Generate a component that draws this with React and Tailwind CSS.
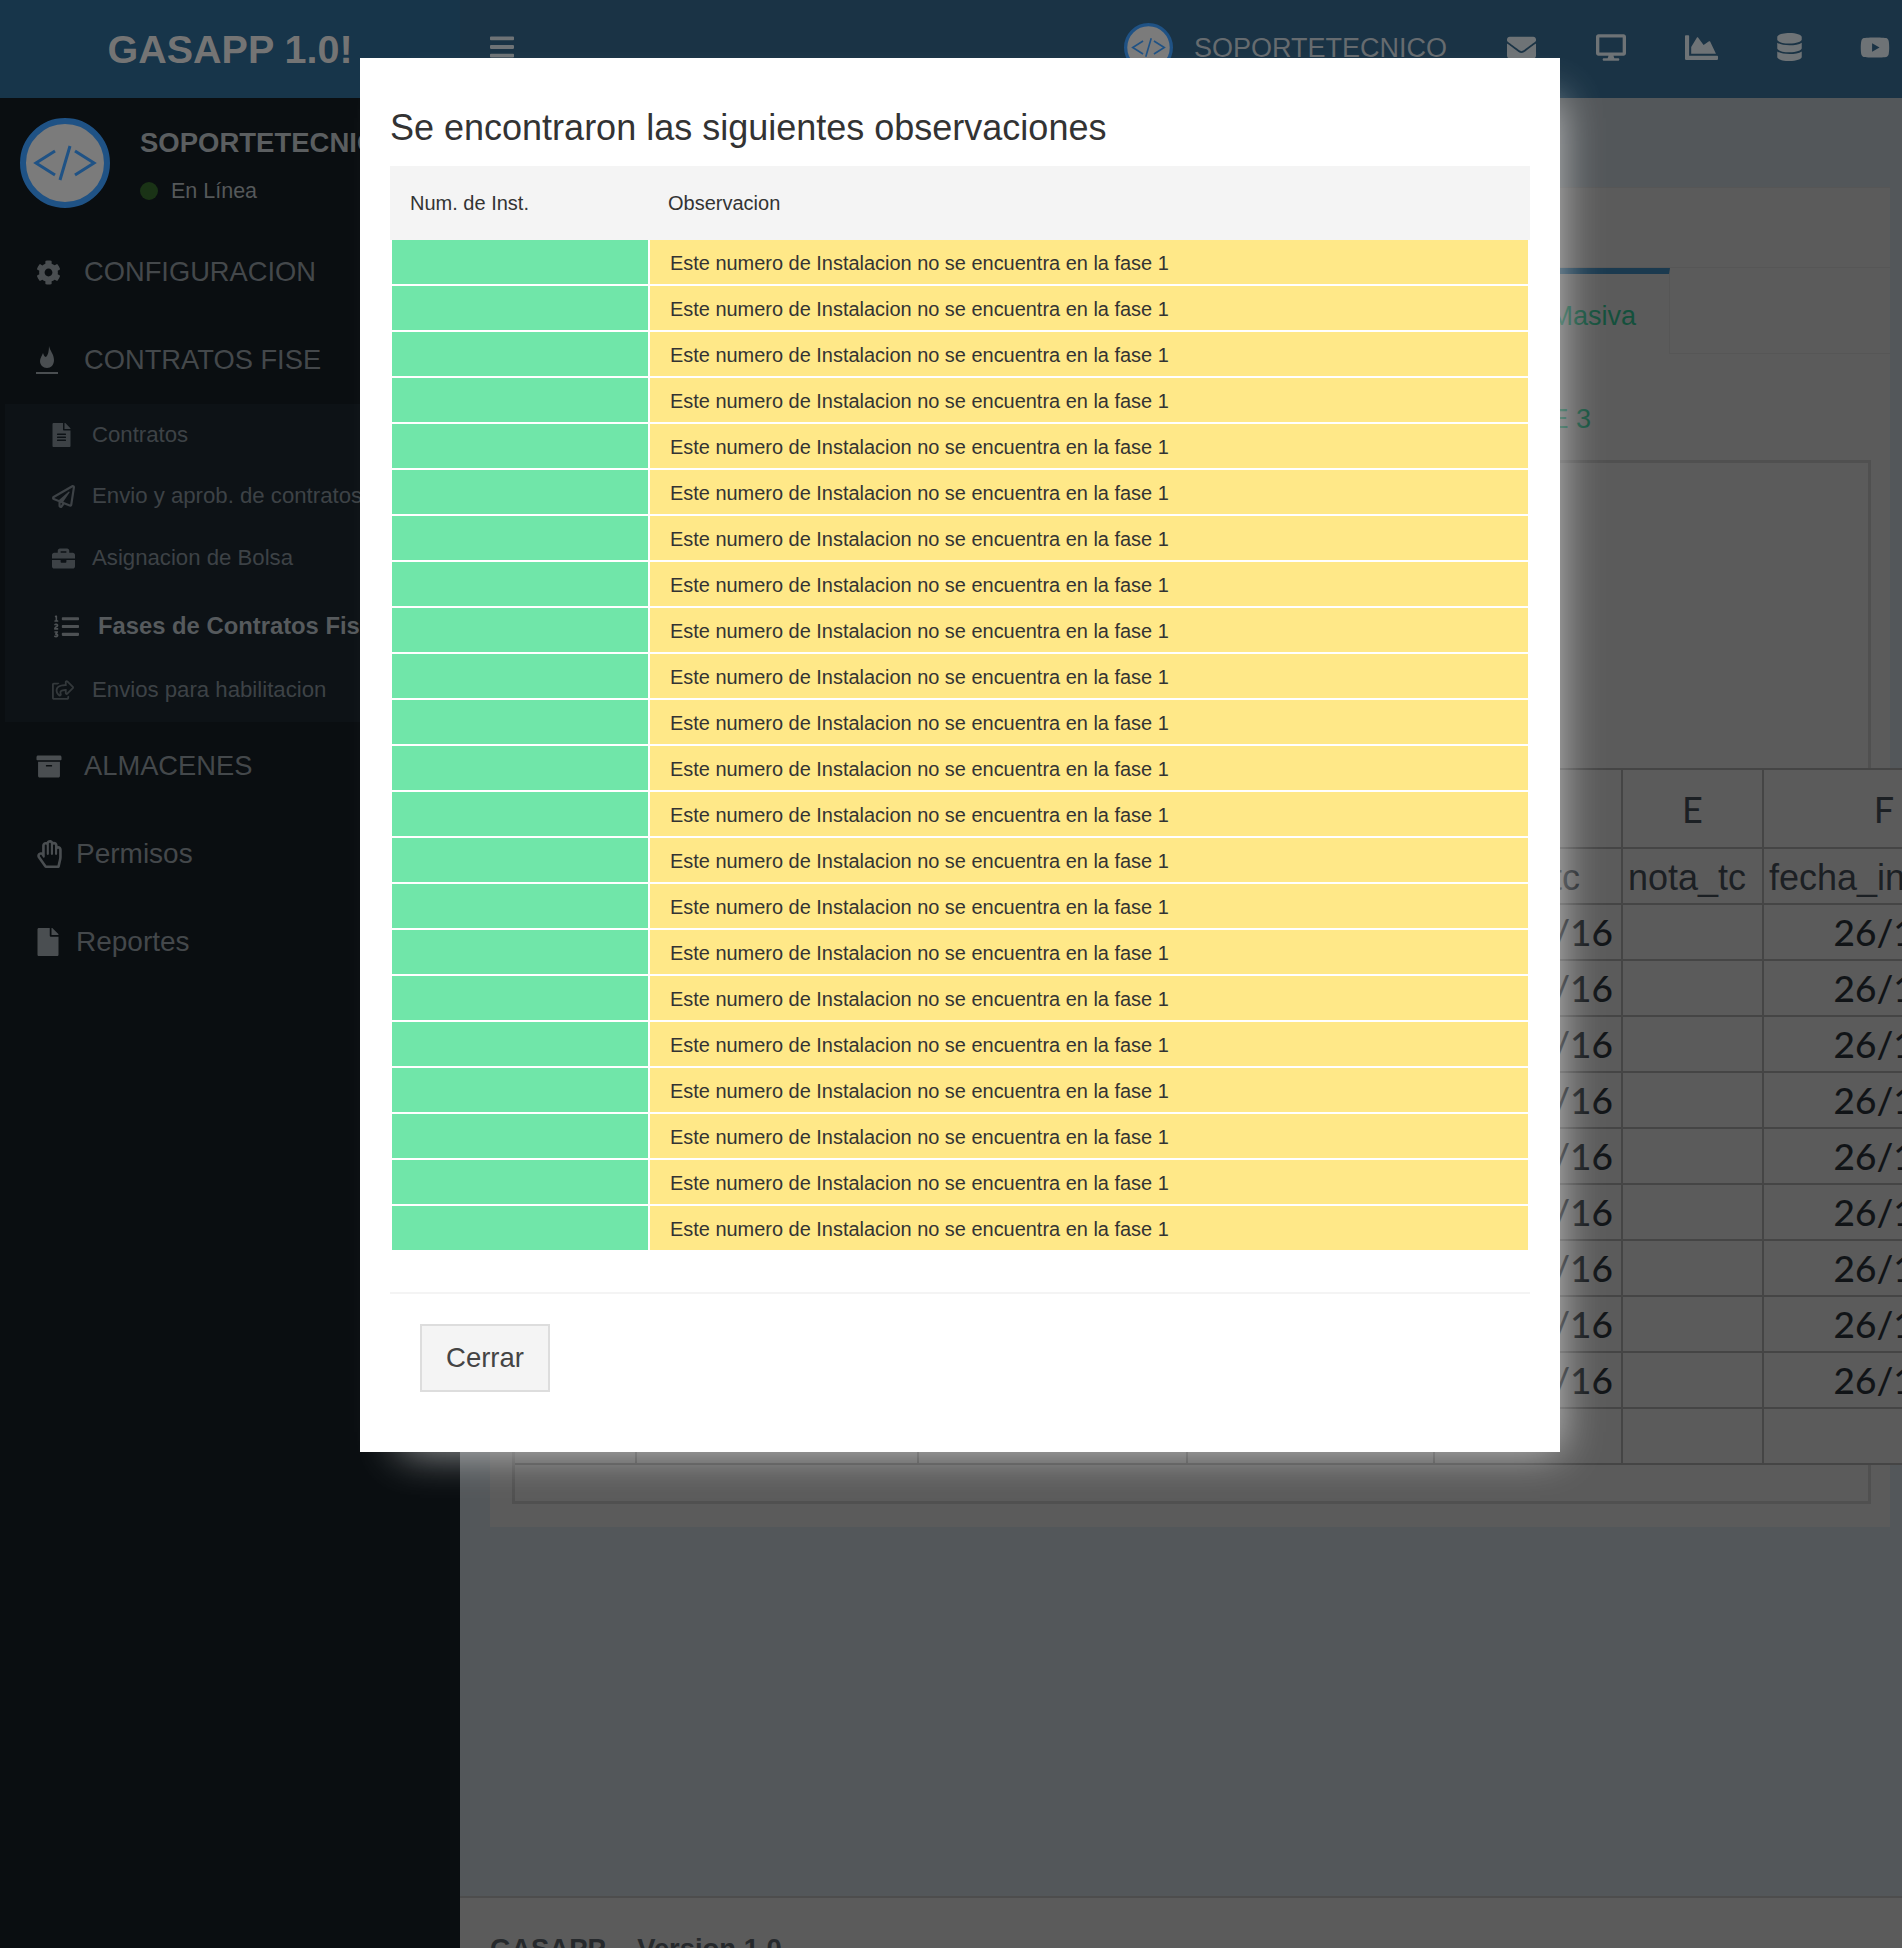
import {
  FaArchive,
  FaBars,
  FaBriefcase,
  FaChartArea,
  FaCog,
  FaDatabase,
  FaDesktop,
  FaEnvelope,
  FaFile,
  FaFileAlt,
  FaListOl,
  FaRegHandPaper,
  FaRegPaperPlane,
  FaRegShareSquare,
  FaYoutube,
} from 'react-icons/fa'

const SANS = "font-['Liberation_Sans',Arial,sans-serif]"
const ROWS = Array.from({ length: 22 })
const DATA_ROWS = Array.from({ length: 9 })

function Avatar({ className }) {
  return (
    <svg viewBox="0 0 90 90" className={className}>
      <circle cx="45" cy="45" r="42" fill="#7b7b7b" stroke="#1f5285" strokeWidth="6" />
      <path d="M35 33 L16 45 L35 57 M55 33 L74 45 L55 57 M50 28 L40 62" fill="none" stroke="#1f5285" strokeWidth="3" />
    </svg>
  )
}

function FlameIcon() {
  return (
    <svg viewBox="0 0 22 28" className="w-[22px] h-[28px] text-[#4a4e51]">
      <path d="M13 0 C14 5 18 8 18 14 C18 19 15 22 11 22 C7 22 4 19 4 15 C4 12 6 10 7 7 C8 10 9 11 10 11 C12 9 13 5 13 0 Z" fill="currentColor" />
      <rect x="0" y="26" width="22" height="2" fill="currentColor" />
    </svg>
  )
}

function MainItem({ icon, label, box = 'w-[48px]', size = 'text-[27.300px]' }) {
  return (
    <div className={`h-[88px] pl-[36px] flex items-center whitespace-nowrap ${size} text-[#44484b]`}>
      <div className={`${box} shrink-0 flex items-center`}>{icon}</div>
      {label}
    </div>
  )
}

function SubItem({ icon, label, height, bold }) {
  return (
    <div className={`${height} flex items-center whitespace-nowrap ${bold ? 'pl-[54px] font-bold text-[#565a5d] text-[23.800px]' : 'pl-[52px] text-[#3d4246] text-[22.200px]'}`}>
      <div className={`${bold ? 'w-[44px]' : 'w-[40px]'} shrink-0 flex items-center`}>{icon}</div>
      {label}
    </div>
  )
}

function Sidebar() {
  return (
    <aside className="w-[460px] shrink-0 bg-[#0a0e11] overflow-hidden">
      <div className="h-[130px] flex pl-[20px] pt-[20px]">
        <Avatar className="w-[90px] h-[90px] shrink-0" />
        <div className="ml-[30px] whitespace-nowrap">
          <div className="text-[27.500px] font-bold text-[#5b5e60] leading-[50px]">SOPORTETECNICO</div>
          <div className="flex items-center mt-[7px] text-[21.500px] text-[#55585a]">
            <span className="w-[18px] h-[18px] rounded-full bg-[#1a3316] mr-[13px]" />
            En Línea
          </div>
        </div>
      </div>
      <MainItem icon={<FaCog className="w-[25px] h-[25px] text-[#4a4e51]" />} label="CONFIGURACION" />
      <MainItem icon={<FlameIcon />} label="CONTRATOS FISE" />
      <div className="ml-[5px] pb-[5px] bg-[#0d1216]">
        <div className="-ml-[5px]">
          <SubItem height="h-[61px]" label="Contratos" icon={<FaFileAlt className="w-[19px] h-[24px] text-[#3d4246]" />} />
          <SubItem height="h-[62px]" label="Envio y aprob. de contratos" icon={<FaRegPaperPlane className="w-[23px] h-[23px] text-[#3d4246]" />} />
          <SubItem height="h-[62px]" label="Asignacion de Bolsa" icon={<FaBriefcase className="w-[23px] h-[23px] text-[#3d4246]" />} />
          <SubItem bold height="h-[74px]" label="Fases de Contratos Fise" icon={<FaListOl className="w-[25px] h-[25px] text-[#4d5154]" />} />
          <SubItem height="h-[54px]" label="Envios para habilitacion" icon={<FaRegShareSquare className="w-[22px] h-[20px] text-[#33383b]" />} />
        </div>
      </div>
      <MainItem icon={<FaArchive className="w-[26px] h-[25px] text-[#4a4e51]" />} label="ALMACENES" />
      <MainItem box="w-[40px]" size="text-[28px]" icon={<FaRegHandPaper className="w-[27px] h-[28px] text-[#4a4e51]" />} label="Permisos" />
      <MainItem box="w-[40px]" size="text-[28px]" icon={<FaFile className="w-[24px] h-[28px] text-[#4a4e51]" />} label="Reportes" />
    </aside>
  )
}

function Topbar() {
  return (
    <header className="h-[98px] shrink-0 flex">
      <div className="w-[460px] shrink-0 bg-[#17354a] flex items-center justify-center pt-[2px] text-[39.500px] font-bold text-[#747474]">
        GASAPP 1.0!
      </div>
      <div className="flex-1 bg-[#1a3345] flex items-center pl-[30px] pr-[12px] pb-[4px] text-[#6e7376]">
        <FaBars className="w-[24px] h-[28px]" />
        <Avatar className="w-[49px] h-[49px] ml-auto" />
        <span className="ml-[21px] mt-[3px] text-[27px] text-[#666b6f]">SOPORTETECNICO</span>
        <FaEnvelope className="ml-[60px] w-[29px] h-[29px]" />
        <FaDesktop className="ml-[60px] w-[30px] h-[27px]" />
        <FaChartArea className="ml-[59px] w-[33px] h-[33px]" />
        <FaDatabase className="ml-[59px] w-[25px] h-[28px]" />
        <FaYoutube className="ml-[58px] w-[30px] h-[27px]" />
      </div>
    </header>
  )
}

function Cell({ children, className = '' }) {
  return <div className={`border-r-2 border-b-2 border-[#454545] flex items-center overflow-hidden whitespace-nowrap ${className}`}>{children}</div>
}

function Sheet() {
  const cols = 'grid grid-cols-[122px_282px_269px_247px_188px_141px_242px]'
  const date = "font-['Lato',sans-serif] font-medium text-[37px] text-[#111417] justify-end"
  return (
    <div className="relative w-[1491px] bg-[#5b5b5b] text-[#1c2024] border-t-2 border-[#454545]">
      <div className={`${cols} h-[79px]`}>
        {['', 'A', 'B', 'C', 'D', 'E', 'F'].map((c) => (
          <Cell key={c} className="justify-center font-['Lato',sans-serif] text-[36px]">
            {c}
          </Cell>
        ))}
      </div>
      <div className={`${cols} h-[56px] text-[36px]`}>
        <Cell />
        <Cell />
        <Cell />
        <Cell />
        <Cell className="pl-[9px] pt-[3px]">fecha_tc</Cell>
        <Cell className="pl-[5px] pt-[3px]">nota_tc</Cell>
        <Cell className="pl-[5px] pt-[3px]">fecha_inicio</Cell>
      </div>
      {DATA_ROWS.map((_, i) => (
        <div key={i} className={`${cols} h-[56px]`}>
          <Cell />
          <Cell />
          <Cell />
          <Cell />
          <Cell className={`${date} pr-[8px]`}>26/10/16</Cell>
          <Cell />
          <Cell className={`${date} pr-[8px]`}>26/10/16</Cell>
        </div>
      ))}
      <div className={`${cols} h-[56px]`}>
        <Cell />
        <Cell />
        <Cell />
        <Cell />
        <Cell />
        <Cell />
        <Cell />
      </div>
    </div>
  )
}

function Panel() {
  return (
    <section className="ml-[30px] mr-[12px] mt-[89px] h-[1340px] bg-[#5b5b5b] border-t border-[#565656]">
      <div className="h-[79px]" />
      <div className="h-[87px] flex border-t border-[#565656]">
        <div className="w-[1180px] h-full border-t-[6px] border-r border-[#1b3a4f] [border-right-color:#565656] pr-[33px] pt-[4px] flex items-center justify-end text-[27px] text-[#14503c] whitespace-nowrap">
          Carga Masiva
        </div>
        <div className="flex-1 border-b border-[#565656]" />
      </div>
      <div className="h-[106px] pr-[299px] pt-[24px] flex items-center justify-end text-[27px] text-[#14503c]">FASE 3</div>
      <div className="ml-[22px] mr-[19px] h-[1044px] border-[3px] border-[#505050]">
        <div className="h-[305px]" />
        <Sheet />
      </div>
    </section>
  )
}

function Modal() {
  return (
    <div className="absolute left-[360px] top-[58px] w-[1200px] h-[1394px] bg-white flex flex-col text-[#333] shadow-[20px_20px_40px_-20px_rgba(255,255,255,0.62)]">
      <h2 className="h-[108px] pl-[30px] pt-[44px] text-[36px] leading-[52px] whitespace-nowrap">Se encontraron las siguientes observaciones</h2>
      <div className="mx-[30px]">
        <div className="h-[74px] bg-[#f4f4f4] flex items-center text-[20px]">
          <div className="w-[278px] pl-[20px]">Num. de Inst.</div>
          <div>Observacion</div>
        </div>
        <div className="px-[2px]">
          {ROWS.map((_, i) => (
            <div key={i} className="h-[46px] pb-[2px] flex gap-[2px]">
              <div className="w-[256px] bg-[#70e6a9]" />
              <div className="flex-1 bg-[#ffe888] flex items-center pl-[20px] pt-[4px] text-[19.950px]">Este numero de Instalacion no se encuentra en la fase 1</div>
            </div>
          ))}
        </div>
      </div>
      <div className="mx-[30px] mt-[40px] pt-[30px] border-t-2 border-[#f4f4f4]">
        <button className="ml-[30px] w-[130px] h-[68px] bg-[#f4f4f4] border-2 border-[#dddddd] text-[27.500px] text-[#444]">Cerrar</button>
      </div>
    </div>
  )
}

export default function App() {
  return (
    <div className={`relative h-[1948px] overflow-hidden flex flex-col bg-[#53575a] ${SANS}`}>
      <Topbar />
      <div className="flex-1 flex min-h-0">
        <Sidebar />
        <main className="flex-1 min-w-0 flex flex-col">
          <Panel />
          <footer className="mt-auto h-[52px] overflow-hidden bg-[#5b5b5b] border-t-2 border-[#4d4d4d] pl-[30px] pt-[35px] text-[27.400px] font-bold leading-[32px] text-[#26292c] whitespace-pre">
            GASAPP  - Version 1.0
          </footer>
        </main>
      </div>
      <Modal />
    </div>
  )
}
